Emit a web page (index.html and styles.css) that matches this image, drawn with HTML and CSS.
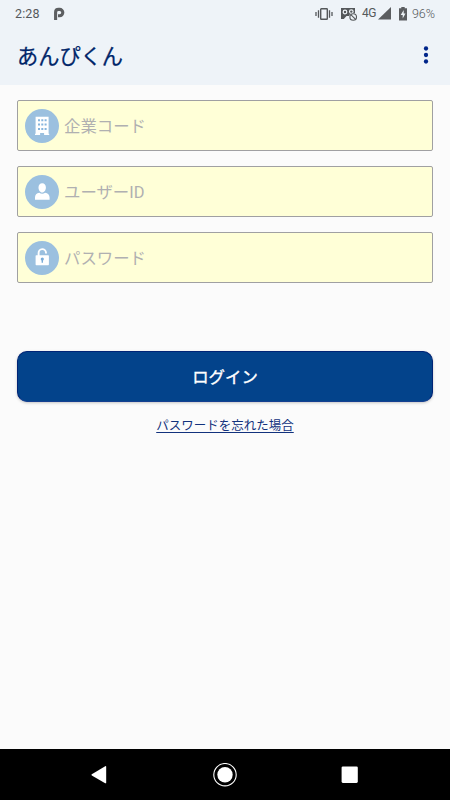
FILE: index.html
```html
<!DOCTYPE html>
<html lang="ja">
<head>
<meta charset="utf-8">
<meta name="viewport" content="width=device-width, initial-scale=1">
<title>あんぴくん</title>
<link rel="stylesheet" href="styles.css">
</head>
<body>
<div class="screen">
  <header class="header">
    <div class="status">
      <div class="status-left">
        <span class="time">2:28</span>
        <svg class="parking" width="12" height="14" viewBox="0 0 12 14"><path d="M2.6 13V5.2Q2.6 2.4 5.6 2.4H6.6A3.1 3.1 0 0 1 6.6 8.8H5" fill="none" stroke="#5c5e61" stroke-width="3.1"/></svg>
      </div>
      <div class="status-right">
        <svg class="vibrate" width="18" height="14" viewBox="0 0 18 14" fill="none" stroke="#55585b"><rect x="5.7" y="1.7" width="6.6" height="10.6" rx=".6" stroke-width="1.4"/><path d="M3.5 3.2v7.6M14.5 3.2v7.6M1 5v4M17 5v4" stroke-width="1.3"/></svg>
        <svg class="voicemail" width="17" height="14" viewBox="0 0 17 14"><path d="M0 1h14v8H5.5L2.8 12H0z" fill="#55585b"/><g fill="none" stroke="#eef3f7" stroke-width="1.2"><circle cx="4" cy="5" r="1.8"/><circle cx="10.3" cy="4.6" r="1.8"/></g><circle cx="12.2" cy="10" r="4.1" fill="#eef3f7"/><circle cx="12.2" cy="10" r="3.3" fill="none" stroke="#55585b" stroke-width="1.1"/><path d="M9.8 7.6l4.8 4.8" stroke="#55585b" stroke-width="1.1"/></svg>
        <span class="network">4G</span>
        <svg class="signal" width="13" height="13" viewBox="0 0 13 13"><path d="M13 0v12.5H0z" fill="#5b5d60"/></svg>
        <svg class="battery" width="8" height="14" viewBox="0 0 8 14"><path d="M2.3 0h3.4v1.3H8V13.5H0V1.3h2.3z" fill="#5b5d60"/><path d="M4.7 3L1.7 8h2v3.5L6.5 6.5H4.7z" fill="#eef3f7"/></svg>
        <span class="percent">96%</span>
      </div>
    </div>
    <div class="toolbar">
      <h1 class="title">あんぴくん</h1>
      <svg class="more" width="6" height="18" viewBox="0 0 6 18" fill="#00258a"><circle cx="3" cy="2.5" r="2.15"/><circle cx="3" cy="9" r="2.15"/><circle cx="3" cy="15.5" r="2.15"/></svg>
    </div>
  </header>
  <main class="content">
    <form class="form">
      <label class="field">
        <svg class="icon" width="34" height="34" viewBox="0 0 34 34"><circle cx="17" cy="17" r="17" fill="#9bc0df"/><path d="M10.6 7.8h13v17h.6V26h-5.1v-2.1h-4V26H10v-1.2h.6z" fill="#fff"/><g fill="#86b5dd"><path d="M13 10.2h2v2h-2zM16.3 10.2h2v2h-2zM19.6 10.2h2v2h-2zM13 14.6h2v2h-2zM16.3 14.6h2v2h-2zM19.6 14.6h2v2h-2zM13 19h2v2h-2zM16.3 19h2v2h-2zM19.6 19h2v2h-2z"/></g></svg>
        <input class="input" type="text" placeholder="企業コード">
      </label>
      <label class="field">
        <svg class="icon" width="34" height="34" viewBox="0 0 34 34"><circle cx="17" cy="17" r="17" fill="#9bc0df"/><path d="M17.2 8.3c2.3 0 3.7 1.7 3.7 4.1 0 2.5-1.5 5-3.7 5s-3.7-2.5-3.7-5c0-2.4 1.4-4.1 3.7-4.1zM10 24.7v-2.3c0-2.7 1.5-4.3 4.3-4.7 1.7 1.4 4.1 1.4 5.8 0 2.8.4 4.5 2 4.5 4.7v2.3z" fill="#fff"/></svg>
        <input class="input latin" type="text" placeholder="ユーザーID">
      </label>
      <label class="field">
        <svg class="icon" width="34" height="34" viewBox="0 0 34 34"><circle cx="17" cy="17" r="17" fill="#9bc0df"/><path d="M13.6 15v-3a3.7 3.7 0 0 1 7.4-.3v.9" fill="none" stroke="#fff" stroke-width="1.9"/><rect x="10.6" y="14.2" width="13.3" height="10" rx=".7" fill="#fff"/><circle cx="17.3" cy="18" r="1.6" fill="#79acd7"/><path d="M16.6 18h1.4v3.8h-1.4z" fill="#79acd7"/></svg>
        <input class="input" type="password" placeholder="パスワード">
      </label>
      <button class="login" type="button">ログイン</button>
    </form>
    <a class="forgot" href="#">パスワードを忘れた場合</a>
  </main>
  <nav class="navbar">
    <svg class="nav-icon" width="24" height="24" viewBox="0 0 24 24"><path d="M3.8 11.2L17.2 3.2q1-.5 1 .5v16q0 1-1 .5L3.8 12.4q-.9-.6 0-1.2z" fill="#fff"/></svg>
    <svg class="nav-icon" width="24" height="24" viewBox="0 0 24 24"><circle cx="12" cy="11.7" r="11.2" fill="none" stroke="#fff" stroke-width="1.1"/><circle cx="12" cy="11.7" r="7.7" fill="#fff"/></svg>
    <svg class="nav-icon" width="24" height="24" viewBox="0 0 24 24"><rect x="3.6" y="3.5" width="16.2" height="16.4" rx="1.3" fill="#fff"/></svg>
  </nav>
</div>
</body>
</html>
```

FILE: styles.css
```css
* { box-sizing: border-box; }

body {
  margin: 0;
  font-family: "Noto Sans CJK JP", sans-serif;
}

.screen {
  display: flex;
  flex-direction: column;
  height: 800px;
  background: #fbfbfb;
}

.header {
  height: 85px;
  background: #eef3f8;
}

.status {
  display: flex;
  justify-content: space-between;
  height: 27px;
  padding: 0 15px;
  font: 12.5px/27px Roboto, sans-serif;
  color: #55585b;
}

.status-left,
.status-right {
  display: flex;
  align-items: center;
}

.time { letter-spacing: .1px; }
.parking { margin-left: 13px; }
.vibrate { margin-right: 8px; }
.voicemail { margin-right: 4px; }
.network { margin-right: 2px; font-size: 12px; letter-spacing: -.5px; }
.signal { margin-right: 8px; }
.battery { margin-right: 5px; }
.percent { font-weight: 300; }

.toolbar {
  display: flex;
  align-items: center;
  justify-content: space-between;
  height: 56px;
  padding: 0 21px 0 17px;
}

.title {
  margin: 0;
  font-size: 21.2px;
  font-weight: 400;
  line-height: 30px;
  color: #002569;
  -webkit-text-stroke: .25px #002569;
}

.content {
  flex: 1;
  display: flex;
  flex-direction: column;
  align-items: center;
  padding: 15px 17px 0;
}

.form {
  display: flex;
  flex-direction: column;
  gap: 15px;
  width: 100%;
}

.field {
  display: flex;
  align-items: center;
  height: 51px;
  padding: 0 7px;
  border: 1px solid #a0a0a2;
  border-radius: 2px;
  background: #ffffd7;
}

.icon { flex: none; }

.input {
  flex: 1;
  min-width: 0;
  height: 34px;
  margin-left: 5px;
  padding: 0 0 2px;
  border: 0;
  outline: 0;
  background: none;
  font: 16.4px/32px "Noto Sans CJK JP", sans-serif;
}

.latin {
  padding: 2px 0 0;
  font-family: Roboto, "Noto Sans CJK JP", sans-serif;
}

.input::placeholder { color: #b0b0b1; }

.login {
  height: 51px;
  margin-top: 53px;
  padding: 0 0 2px;
  border: 1px solid #002476;
  border-bottom-color: #153f91;
  border-radius: 10px;
  background: #03438b;
  box-shadow: 0 1px 3px rgba(0, 0, 0, .22);
  color: #fff;
  font: 16.4px/24px "Noto Sans CJK JP", sans-serif;
  -webkit-text-stroke: .35px #fff;
}

.forgot {
  margin-top: 14px;
  font-size: 12.5px;
  line-height: 18px;
  color: #12327d;
  text-decoration: underline;
  text-underline-offset: 2px;
}

.navbar {
  display: flex;
  justify-content: space-between;
  align-items: center;
  height: 51px;
  padding: 0 88px;
  background: #000;
}
```
